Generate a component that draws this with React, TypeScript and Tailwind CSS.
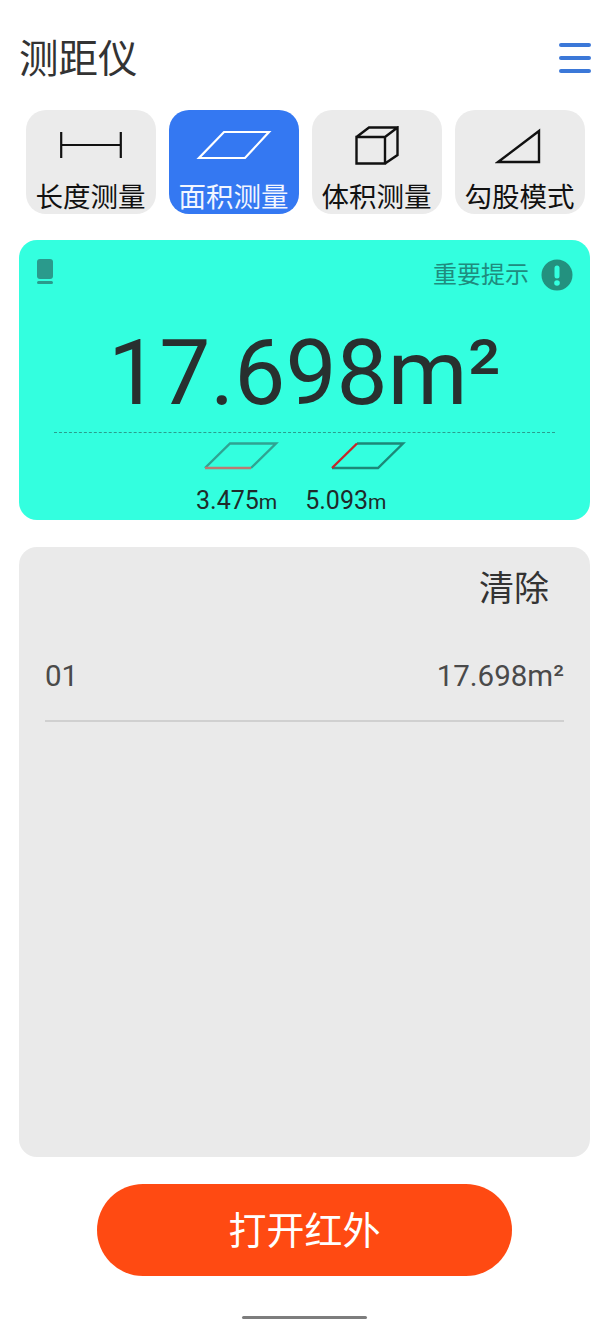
import React from "react";

const FONT = "font-['Roboto','Noto_Sans_CJK_SC',sans-serif]";

function LengthIcon() {
  return (
    <svg width="62" height="26" viewBox="0 0 62 26" fill="none" stroke="#111" strokeWidth="2.2">
      <path d="M1.2 0V26M60.8 0V26M1 13H61" />
    </svg>
  );
}
function AreaIcon() {
  return (
    <svg width="76" height="30" viewBox="0 0 76 30" fill="none" stroke="#fff" strokeWidth="2.2">
      <path d="M28 2H73L49 28H3Z" />
    </svg>
  );
}
function CubeIcon() {
  return (
    <svg width="44" height="39" viewBox="0 0 44 39" fill="none" stroke="#111" strokeWidth="2.4">
      <path d="M1.5 11H30V37.5H1.5ZM1.5 11L14 1.5H42.5M30 11L42.5 1.5V29L30 37.5" />
    </svg>
  );
}
function TriangleIcon() {
  return (
    <svg className="mr-[4px]" width="46" height="37" viewBox="0 0 46 37" fill="none" stroke="#111" strokeWidth="2.4">
      <path d="M44 4V35H3Z" />
    </svg>
  );
}

function Tab({ label, active, children }: { label: string; active?: boolean; children: React.ReactNode }) {
  return (
    <div
      className={`w-[130px] h-[104px] rounded-[20px] flex flex-col items-center ${active ? "bg-[#3478f2] text-[#f2f6ff]" : "bg-[#ebebeb] text-[#111]"}`}
    >
      <div className="h-[71px] shrink-0 w-full flex items-center justify-center pb-[1px]">{children}</div>
      <div className="text-[27.5px] leading-[33px] whitespace-nowrap pr-[1px]">{label}</div>
    </div>
  );
}

function Para({ red }: { red: "bottom" | "left" }) {
  return (
    <svg width="76" height="28" viewBox="0 0 76 28" fill="none" strokeWidth="2.4">
      {red === "bottom" ? (
        <>
          <path d="M2 26L27 1.5H73L48 26" stroke="#2fa392" />
          <path d="M2 26H48" stroke="#bb7a72" />
        </>
      ) : (
        <>
          <path d="M27 1.5H73L48 26H2" stroke="#1c8878" />
          <path d="M2 26L27 1.5" stroke="#c4262a" />
        </>
      )}
    </svg>
  );
}

function Value({ value }: { value: string }) {
  return (
    <div className="text-[25px] leading-[28px] text-[#1f2a2a] whitespace-nowrap">
      {value}
      <span className="text-[21px]">m</span>
    </div>
  );
}

export default function App() {
  return (
    <div className={`${FONT} w-[610px] h-[1327px] bg-white flex flex-col overflow-hidden`}>
      <header className="h-[110px] pl-[19px] pr-[19px] pt-[35px] flex items-start justify-between">
        <h1 className="text-[39.5px] leading-[50px] font-normal text-[#333]">测距仪</h1>
        <div className="mt-[8px] w-[32px] h-[30px] flex flex-col justify-between">
          <div className="h-[4px] rounded-full bg-[#3b78d8]" />
          <div className="h-[4px] rounded-full bg-[#3b78d8]" />
          <div className="h-[4px] rounded-full bg-[#3b78d8]" />
        </div>
      </header>

      <div className="pl-[26px] flex gap-[13px]">
        <Tab label="长度测量"><LengthIcon /></Tab>
        <Tab label="面积测量" active><AreaIcon /></Tab>
        <Tab label="体积测量"><CubeIcon /></Tab>
        <Tab label="勾股模式"><TriangleIcon /></Tab>
      </div>

      <section className="mt-[26px] mx-[19px] w-[571px] h-[280px] rounded-[18px] bg-[#33ffdf] flex flex-col">
        <div className="pl-[18px] pr-[17px] pt-[19px] flex items-start justify-between">
          <div className="w-[16px] flex flex-col gap-[2px]">
            <div className="h-[20px] rounded-[3px] bg-[#2a9a8c]" />
            <div className="h-[3px] rounded-full bg-[#2a9a8c]" />
          </div>
          <div className="flex items-center gap-[12px]">
            <span className="text-[24px] leading-[32px] text-[#1f8c7e]">重要提示</span>
            <svg width="32" height="32" viewBox="0 0 32 32">
              <circle cx="16" cy="16" r="15.5" fill="#23917f" />
              <rect x="13.5" y="6.5" width="5" height="13" rx="2.5" fill="#33ffdf" />
              <circle cx="16" cy="24" r="2.8" fill="#33ffdf" />
            </svg>
          </div>
        </div>
        <div className="mt-[32px] text-center text-[91px] leading-[100px] font-normal text-[#28302f] whitespace-nowrap">
          17.698m²
        </div>
        <div className="mt-[9px] mx-[35px] border-t border-dashed border-[#2a9d8e]" />
        <div className="mt-[9px] flex gap-[51px] pl-[184px]">
          <Para red="bottom" />
          <Para red="left" />
        </div>
        <div className="mt-[17px] flex gap-[28px] pl-[177px]">
          <Value value="3.475" />
          <Value value="5.093" />
        </div>
      </section>

      <section className="mt-[27px] mx-[19px] w-[571px] h-[610px] rounded-[18px] bg-[#eaeaea] px-[26px] pt-[20px]">
        <div className="text-right pr-[15px] text-[35px] leading-[46px] text-[#333]">清除</div>
        <div className="mt-[44px] pb-[25px] flex items-center justify-between border-b-2 border-[#d0d0d0] text-[#4a4a4a] text-[29.5px] leading-[38px]">
          <span>01</span>
          <span>17.698m²</span>
        </div>
      </section>

      <button className="mt-[27px] ml-[97px] w-[415px] h-[92px] pt-[3px] rounded-full bg-[#ff4a12] text-[#fff] text-[38px] font-normal">
        打开红外
      </button>

      <div className="mt-[40px] ml-[242px] w-[125px] h-[3px] rounded-full bg-[#7d7d7d]" />
    </div>
  );
}
